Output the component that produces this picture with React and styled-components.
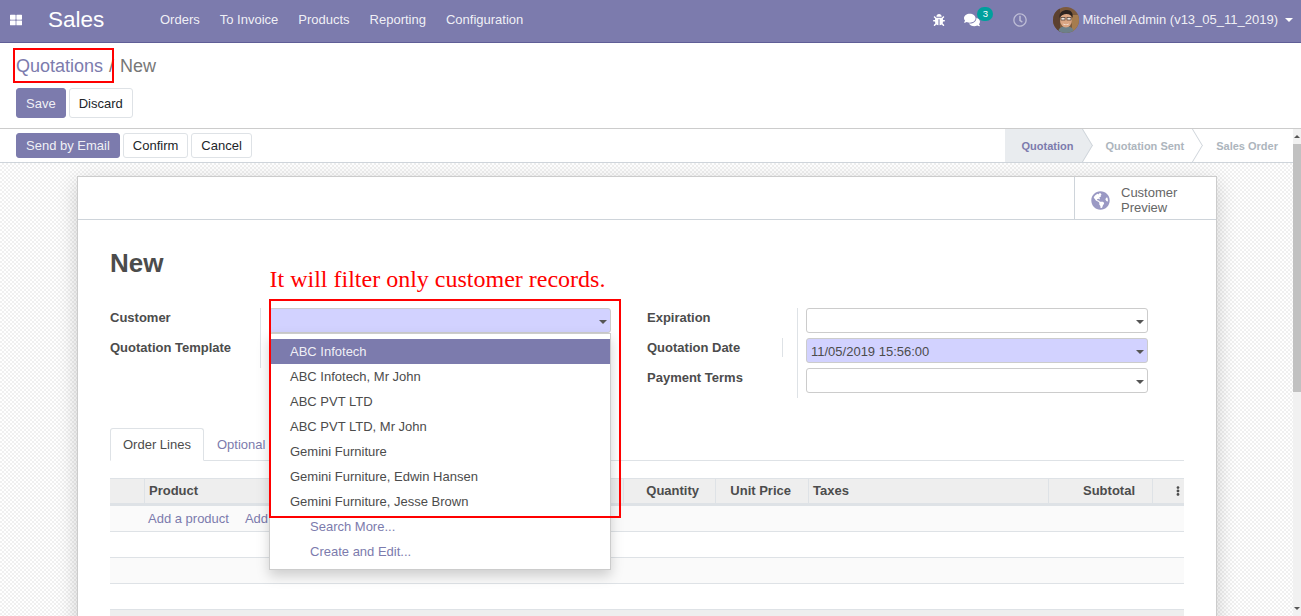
import React from "react";
import styled, { createGlobalStyle } from "styled-components";
import { FaThLarge, FaBug, FaComments, FaRegClock, FaGlobeAmericas, FaEllipsisV } from "react-icons/fa";

const purple = "#7C7BAD";
const textColor = "#4c4c4c";

const GlobalStyle = createGlobalStyle`
  html, body {
    margin: 0;
    height: 100%;
    overflow: hidden;
    background: #fff;
    font-family: "Liberation Sans", Arial, sans-serif;
    font-size: 13px;
    color: ${textColor};
  }
  * { box-sizing: border-box; }
`;

const menuItems = ["Orders", "To Invoice", "Products", "Reporting", "Configuration"];
const customers = [
  "ABC Infotech",
  "ABC Infotech, Mr John",
  "ABC PVT LTD",
  "ABC PVT LTD, Mr John",
  "Gemini Furniture",
  "Gemini Furniture, Edwin Hansen",
  "Gemini Furniture, Jesse Brown",
];

const Avatar = () => (
  <AvatarSvg viewBox="0 0 26 26">
    <defs>
      <clipPath id="round">
        <circle cx="13" cy="13" r="13" />
      </clipPath>
    </defs>
    <g clipPath="url(#round)">
      <rect width="26" height="26" fill="#7d5a3c" />
      <rect x="0" y="0" width="7" height="26" fill="#5b4030" />
      <rect x="19" y="8" width="7" height="18" fill="#a67c4f" />
      <path d="M5 26c0-5 4-7 8-7s8 2 8 7z" fill="#6d8088" />
      <ellipse cx="13" cy="13" rx="6" ry="7.5" fill="#d9a583" />
      <path d="M6.5 11C6 5 10 3 14 3s6.500 3 5.500 8c-1-3-3-4-6-4s-5 1-7 4z" fill="#2c2320" />
      <rect x="8" y="10.500" width="4" height="2.500" fill="#efe7e0" stroke="#2c2320" strokeWidth=".6" />
      <rect x="14" y="10.500" width="4" height="2.500" fill="#efe7e0" stroke="#2c2320" strokeWidth=".6" />
      <path d="M10 16.500c1.500 1.500 4.500 1.500 6 0-.5 2-5.500 2-6 0z" fill="#fff" />
    </g>
  </AvatarSvg>
);

const Select = ({ value, required }) => (
  <Field $required={required}>
    {value}
    <Caret />
  </Field>
);

const App = () => (
  <Page>
    <GlobalStyle />
    <NavBar>
      <AppsIcon>
        <FaThLarge />
      </AppsIcon>
      <Brand>Sales</Brand>
      <Menu>
        {menuItems.map(item => (
          <MenuItem key={item}>{item}</MenuItem>
        ))}
      </Menu>
      <Systray>
        <BugIcon>
          <FaBug />
        </BugIcon>
        <MessagesIcon>
          <FaComments />
          <Badge>3</Badge>
        </MessagesIcon>
        <ClockIcon>
          <FaRegClock />
        </ClockIcon>
        <UserMenu>
          <Avatar />
          <span>Mitchell Admin (v13_05_11_2019)</span>
          <UserCaret />
        </UserMenu>
      </Systray>
    </NavBar>

    <ControlPanel>
      <Breadcrumb>
        <a>Quotations</a>
        <Slash>/</Slash>
        <span>New</span>
        <BreadcrumbMark />
      </Breadcrumb>
      <ButtonRow>
        <BigButton $primary>Save</BigButton>
        <BigButton>Discard</BigButton>
      </ButtonRow>
    </ControlPanel>

    <Body>
      <Content>
        <StatusHeader>
          <ActionButtons>
            <SmallButton $primary>Send by Email</SmallButton>
            <SmallButton>Confirm</SmallButton>
            <SmallButton>Cancel</SmallButton>
          </ActionButtons>
          <StatusBar>
            <Step $active>Quotation</Step>
            <Step>Quotation Sent</Step>
            <Step $last>Sales Order</Step>
          </StatusBar>
        </StatusHeader>

        <Backdrop>
          <Sheet>
            <ButtonBox>
              <PreviewButton>
                <GlobeIcon>
                  <FaGlobeAmericas />
                </GlobeIcon>
                <span>
                  Customer
                  <br />
                  Preview
                </span>
              </PreviewButton>
            </ButtonBox>

            <SheetBody>
              <Title>New</Title>
              <FormGrid>
                <FormColumn>
                  <Row>
                    <Label>Customer</Label>
                    <Select required />
                  </Row>
                  <Row>
                    <Label>Quotation Template</Label>
                    <Select />
                  </Row>
                </FormColumn>
                <FormColumn>
                  <Row>
                    <Label>Expiration</Label>
                    <Select />
                  </Row>
                  <Row>
                    <Label $help>Quotation Date</Label>
                    <Select required value="11/05/2019 15:56:00" />
                  </Row>
                  <Row>
                    <Label>Payment Terms</Label>
                    <Select />
                  </Row>
                </FormColumn>
              </FormGrid>

              <Tabs>
                <Tab $active>Order Lines</Tab>
                <Tab>Optional Products</Tab>
                <Tab>Other Info</Tab>
              </Tabs>

              <LinesTable>
                <HeadRow>
                  <HeadCell />
                  <HeadCell>Product</HeadCell>
                  <HeadCell $right>Quantity</HeadCell>
                  <HeadCell $right $pad={17}>
                    Unit Price
                  </HeadCell>
                  <HeadCell>Taxes</HeadCell>
                  <HeadCell $right $pad={17}>
                    Subtotal
                  </HeadCell>
                  <KebabCell>
                    <FaEllipsisV />
                  </KebabCell>
                </HeadRow>
                <LineRow $odd>
                  <AddLinks>
                    <a>Add a product</a>
                    <a>Add a section</a>
                    <a>Add a note</a>
                  </AddLinks>
                </LineRow>
                <LineRow />
                <LineRow $odd />
                <LineRow />
                <TableFoot />
              </LinesTable>
            </SheetBody>
          </Sheet>
        </Backdrop>
      </Content>
      <Scrollbar>
        <ScrollArrow />
        <ScrollTrack>
          <ScrollThumb />
        </ScrollTrack>
        <ScrollArrow $down />
      </Scrollbar>
    </Body>

    <Annotation>It will filter only customer records.</Annotation>
    <Dropdown>
      {customers.map((name, i) => (
        <Option key={name} $selected={i === 0}>
          {name}
        </Option>
      ))}
      <Option $link>Search More...</Option>
      <Option $link>Create and Edit...</Option>
    </Dropdown>
    <AnnotationBox />
  </Page>
);

export default App;

const Page = styled.div`
  position: relative;
  height: 616px;
  overflow: hidden;
  display: flex;
  flex-direction: column;
`;

const NavBar = styled.header`
  height: 43px;
  flex: none;
  display: flex;
  align-items: center;
  background: ${purple};
  border-bottom: 1px solid #5f5e97;
  color: #fff;
  padding: 0 8px 3px 10px;
`;

const AppsIcon = styled.span`
  display: flex;
  font-size: 12px;
  width: 38px;
`;

const Brand = styled.span`
  font-size: 22.500px;
  width: 112px;
`;

const Menu = styled.nav`
  display: flex;
  gap: 20px;
`;

const MenuItem = styled.a`
  color: rgba(255, 255, 255, 0.9);
`;

const Systray = styled.div`
  margin-left: auto;
  display: flex;
  align-items: center;
`;

const BugIcon = styled.span`
  display: flex;
  font-size: 12px;
  margin-right: 19px;
`;

const MessagesIcon = styled.span`
  position: relative;
  display: flex;
  font-size: 16px;
  margin-right: 33px;
`;

const Badge = styled.span`
  position: absolute;
  left: 13px;
  top: -5px;
  width: 16px;
  height: 14px;
  border-radius: 8px;
  background: #00a09d;
  color: #fff;
  font-size: 9.500px;
  line-height: 14px;
  text-align: center;
`;

const ClockIcon = styled.span`
  display: flex;
  font-size: 14px;
  opacity: 0.5;
  margin-right: 26px;
`;

const UserMenu = styled.div`
  display: flex;
  align-items: center;
  gap: 3px;
  color: rgba(255, 255, 255, 0.9);
`;

const AvatarSvg = styled.svg`
  width: 26px;
  height: 26px;
  display: block;
`;

const UserCaret = styled.span`
  margin-left: 4px;
  border-top: 4px solid #fff;
  border-left: 4px solid transparent;
  border-right: 4px solid transparent;
`;

const ControlPanel = styled.div`
  height: 86px;
  flex: none;
  padding: 11px 16px 0;
  border-bottom: 1px solid #ccc;
`;

const Breadcrumb = styled.div`
  position: relative;
  font-size: 18px;
  line-height: 24px;
  height: 34px;
  color: #777;

  a {
    color: ${purple};
  }
`;

const BreadcrumbMark = styled.div`
  position: absolute;
  left: -3px;
  top: -6px;
  width: 101px;
  height: 35px;
  border: 2px solid #f00;
`;

const Slash = styled.span`
  margin: 0 6px;
`;

const ButtonRow = styled.div`
  display: flex;
  gap: 3px;
`;

const BigButton = styled.button`
  height: 30px;
  padding: 0 9px;
  font: inherit;
  border-radius: 3px;
  border: 1px solid ${p => (p.$primary ? purple : "#dee2e6")};
  background: ${p => (p.$primary ? purple : "#fff")};
  color: ${p => (p.$primary ? "rgba(255,255,255,.9)" : "#212529")};
`;

const SmallButton = styled(BigButton)`
  height: 25px;
`;

const Body = styled.div`
  flex: 1;
  min-height: 0;
  display: flex;
`;

const Content = styled.div`
  flex: 1;
  min-width: 0;
  display: flex;
  flex-direction: column;
`;

const StatusHeader = styled.div`
  height: 34px;
  flex: none;
  display: flex;
  justify-content: space-between;
  border-bottom: 1px solid #ced4da;
  padding-left: 16px;
  background: #fff;
`;

const ActionButtons = styled.div`
  display: flex;
  gap: 3px;
  padding-top: 4px;
`;

const StatusBar = styled.div`
  display: flex;
`;

const Step = styled.div`
  position: relative;
  height: 33px;
  line-height: 35px;
  font-size: 11px;
  font-weight: bold;
  padding: ${p => (p.$active ? "0 10px 0 16px" : p.$last ? "0 15px 0 23px" : "0 9px 0 22px")};
  color: ${p => (p.$active ? purple : "#adb5bd")};
  background: ${p => (p.$active ? "#e9ecef" : "#fff")};
  z-index: ${p => (p.$active ? 3 : p.$last ? 1 : 2)};

  &::before,
  &::after {
    content: ${p => (p.$last ? "none" : '""')};
    position: absolute;
    right: -5px;
    width: 10px;
    height: 17px;
    background: inherit;
    border-right: 1px solid #ced4da;
  }
  &::before {
    top: 0;
    transform: skewX(31deg);
  }
  &::after {
    bottom: 0;
    transform: skewX(-31deg);
  }
`;

const Backdrop = styled.div`
  flex: 1;
  min-height: 0;
  overflow: hidden;
  padding: 13px 0 0 77px;
  background: repeating-conic-gradient(#f0f0f0 0 25%, #fff 0 50%) 0 0 / 4px 4px;
`;

const Sheet = styled.div`
  width: 1140px;
  background: #fff;
  border: 1px solid #ccc;
  box-shadow: 0 5px 20px -1px rgba(0, 0, 0, 0.2);
  min-height: 600px;
`;

const ButtonBox = styled.div`
  height: 43px;
  display: flex;
  justify-content: flex-end;
  border-bottom: 1px solid #ced4da;
`;

const PreviewButton = styled.div`
  width: 142px;
  display: flex;
  align-items: center;
  border-left: 1px solid #ced4da;
  padding: 4px 0 0 16px;
  color: #666;
  line-height: 15px;
`;

const GlobeIcon = styled.span`
  display: flex;
  font-size: 19px;
  color: #9a99c4;
  margin-right: 11px;
`;

const SheetBody = styled.div`
  padding: 29px 32px 0 32px;
`;

const Title = styled.h1`
  margin: 0;
  font-size: 26px;
  line-height: 28px;
  font-weight: bold;
  color: ${textColor};
  height: 59px;
`;

const FormGrid = styled.div`
  display: grid;
  grid-template-columns: 537px 1fr;
  height: 120px;
`;

const FormColumn = styled.div`
  display: flex;
  flex-direction: column;
`;

const Row = styled.div`
  display: grid;
  grid-template-columns: 151px 351px;
  width: 502px;
  height: 30px;
`;

const Label = styled.label`
  position: relative;
  font-weight: bold;
  line-height: 19px;
  border-right: 1px solid #dee2e6;
  ${p =>
    p.$help &&
    `
    &::after {
      content: "";
      position: absolute;
      left: 135px;
      top: 0;
      height: 19px;
      border-left: 1px solid #dee2e6;
    }
  `}
`;

const Field = styled.div`
  position: relative;
  margin-left: 8px;
  height: 25px;
  width: 342px;
  border: 1px solid #ccc;
  border-radius: 3px;
  background: ${p => (p.$required ? "#D2D2FF" : "#fff")};
  padding: 0 4px;
  line-height: 25px;
`;

const Caret = styled.span`
  position: absolute;
  right: 3px;
  top: 11px;
  border-top: 4px solid #555;
  border-left: 4px solid transparent;
  border-right: 4px solid transparent;
`;

const Tabs = styled.div`
  display: flex;
  height: 33px;
  border-bottom: 1px solid #dee2e6;
`;

const Tab = styled.a`
  height: 33px;
  line-height: 31px;
  padding: 0 12px;
  border: 1px solid ${p => (p.$active ? "#dee2e6" : "transparent")};
  border-bottom-color: ${p => (p.$active ? "#fff" : "transparent")};
  border-radius: 3px 3px 0 0;
  color: ${p => (p.$active ? textColor : purple)};
  white-space: nowrap;
`;

const LinesTable = styled.div`
  margin-top: 17px;
`;

const HeadRow = styled.div`
  display: grid;
  grid-template-columns: 35px 479px 92px 93px 240px 104px 31px;
  height: 28px;
  background: #eee;
  border-top: 1px solid #dee2e6;
  border-bottom: 3px solid #dee2e6;
`;

const HeadCell = styled.div`
  font-weight: bold;
  line-height: 24px;
  padding: 0 ${p => (p.$right ? `${p.$pad || 16}px` : "4px")} 0 4px;
  text-align: ${p => (p.$right ? "right" : "left")};
  border-right: 1px solid #dee2e6;
`;

const KebabCell = styled.div`
  display: flex;
  align-items: center;
  justify-content: flex-end;
  padding-right: 1px;
  font-size: 10px;
`;

const LineRow = styled.div`
  height: 26px;
  background: ${p => (p.$odd ? "#fafafa" : "#fff")};
  border-bottom: 1px solid #dee2e6;
`;

const AddLinks = styled.div`
  display: flex;
  gap: 16px;
  padding-left: 38px;
  line-height: 25px;

  a {
    color: ${purple};
  }
`;

const TableFoot = styled.div`
  height: 30px;
  background: #eee;
`;

const Scrollbar = styled.div`
  width: 8px;
  flex: none;
  display: flex;
  flex-direction: column;
  background: #f1f1f1;
`;

const ScrollArrow = styled.div`
  height: 15px;
  flex: none;
  display: flex;
  align-items: center;
  justify-content: center;

  &::before {
    content: "";
    border-left: 3px solid transparent;
    border-right: 3px solid transparent;
    ${p => (p.$down ? "border-top: 3px solid #555;" : "border-bottom: 3px solid #555;")}
  }
`;

const ScrollTrack = styled.div`
  flex: 1;
  min-height: 0;
`;

const ScrollThumb = styled.div`
  height: 248px;
  background: #c1c1c1;
`;

const Annotation = styled.div`
  position: absolute;
  left: 269.500px;
  top: 265px;
  font-family: "Liberation Serif", "Times New Roman", serif;
  font-size: 24px;
  line-height: 28px;
  color: #f00;
  white-space: nowrap;
`;

const AnnotationBox = styled.div`
  position: absolute;
  left: 269px;
  top: 299px;
  width: 352px;
  height: 219px;
  border: 2px solid #f00;
  pointer-events: none;
`;

const Dropdown = styled.div`
  position: absolute;
  left: 269px;
  top: 333px;
  width: 342px;
  height: 237px;
  padding-top: 5px;
  background: #fff;
  border: 1px solid #ccc;
  box-shadow: 0 6px 12px rgba(0, 0, 0, 0.175);
`;

const Option = styled.div`
  height: 25px;
  line-height: 25px;
  padding-left: ${p => (p.$link ? "40px" : "20px")};
  background: ${p => (p.$selected ? purple : "transparent")};
  color: ${p => (p.$selected ? "rgba(255,255,255,.9)" : p.$link ? purple : textColor)};
`;
